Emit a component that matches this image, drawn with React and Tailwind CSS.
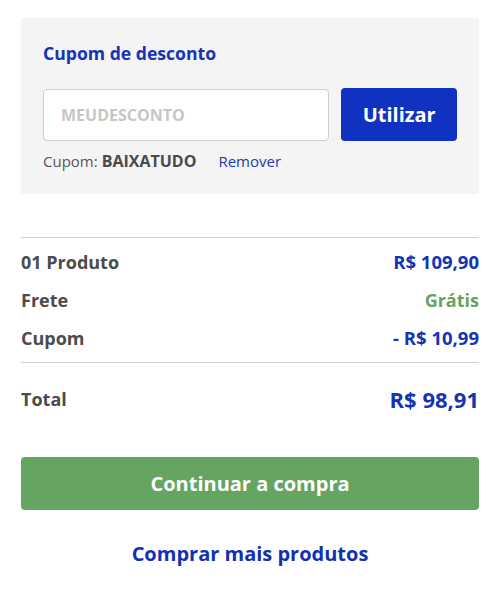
import React from "react";

export default function App() {
  return (
    <div
      className="w-[500px] h-[595px] bg-white px-[21px] pt-[18px]"
      style={{ fontFamily: "'Open Sans', 'Noto Sans', sans-serif" }}
    >
      <div className="bg-[#f4f4f4] rounded-[3px] px-[22px] pt-[23px] h-[176px]">
        <h2 className="text-[17.6px] font-bold text-[#1434b4] leading-[24px]">
          Cupom de desconto
        </h2>
        <div className="flex gap-[12px] mt-[24px]">
          <input
            className="w-[287px] h-[52px] bg-white border border-[#cfcfcf] rounded-[4px] px-[17px] text-[16px] font-bold placeholder:text-[#c6c6c6] outline-none"
            placeholder="MEUDESCONTO"
          />
          <button className="w-[116px] h-[53px] bg-[#1131c1] rounded-[4px] text-white text-[20px] font-bold -mt-px">
            Utilizar
          </button>
        </div>
        <div className="flex items-center mt-[10px] text-[15px] leading-[20px]">
          <span className="text-[#555]">Cupom:</span>
          <span className="text-[#4a4a4a] font-bold ml-[4px] text-[16px]">BAIXATUDO</span>
          <span className="text-[#1d3aaf] ml-[22px]">Remover</span>
        </div>
      </div>

      <div className="mt-[43px] border-t border-[#cfcfcf] pt-[13px] pb-[13px] flex flex-col gap-[16px]">
        <div className="flex justify-between text-[18px] font-bold leading-[22px]">
          <span className="text-[#4b4b4b]">01 Produto</span>
          <span className="text-[#1434b4] text-[18.5px]">R$ 109,90</span>
        </div>
        <div className="flex justify-between text-[18px] font-bold leading-[22px]">
          <span className="text-[#4b4b4b]">Frete</span>
          <span className="text-[#67a262]">Grátis</span>
        </div>
        <div className="flex justify-between text-[18px] font-bold leading-[22px]">
          <span className="text-[#4b4b4b]">Cupom</span>
          <span className="text-[#1434b4] text-[18.5px]">- R$ 10,99</span>
        </div>
      </div>
      <div className="border-t border-[#cfcfcf] pt-[21px] flex justify-between items-center font-bold leading-[30px]">
        <span className="text-[18px] text-[#4b4b4b]">Total</span>
        <span className="text-[22px] text-[#1434b4]">R$ 98,91</span>
      </div>

      <button className="mt-[43px] w-full h-[53px] bg-[#66a461] rounded-[4px] text-white text-[20px] font-bold">
        Continuar a compra
      </button>
      <div className="mt-[29px] text-center text-[20px] font-bold text-[#1131b4] leading-[30px]">
        Comprar mais produtos
      </div>
    </div>
  );
}
